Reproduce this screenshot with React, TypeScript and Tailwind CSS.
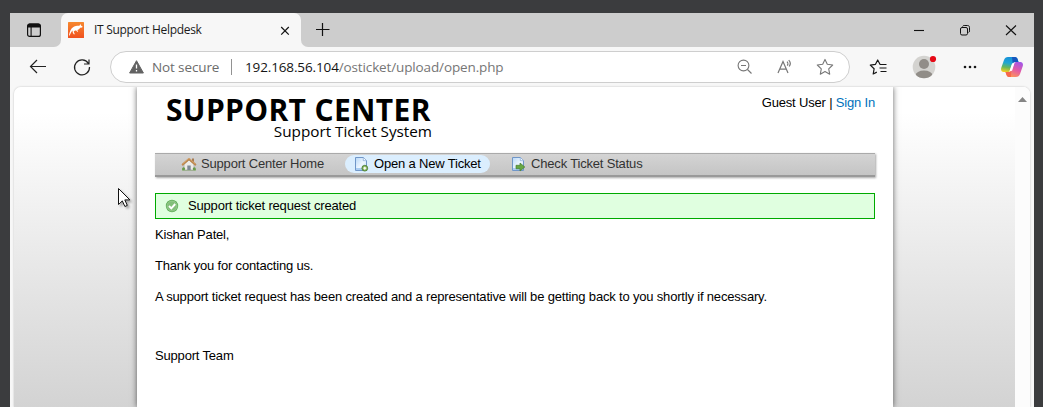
import React from "react";

const ui = "font-['Open_Sans','Noto_Sans',sans-serif]";

function TabActionsIcon() {
  return (
    <svg width="16" height="16" viewBox="0 0 16 16" fill="none" className="block">
      <rect x="1.6" y="2.1" width="12.8" height="12.3" rx="2" stroke="#111" strokeWidth="1.2" />
      <path d="M1.5 5.4V4a2.3 2.3 0 0 1 2.3-2.4h8.4A2.3 2.3 0 0 1 14.5 4v1.4z" fill="#111" />
      <path d="M5.1 5v9" stroke="#111" strokeWidth="1.1" />
    </svg>
  );
}

function Favicon() {
  return (
    <svg width="16" height="16" viewBox="0 0 16 16" className="block">
      <defs>
        <linearGradient id="fav" x1="0" y1="0" x2="0" y2="1">
          <stop offset="0" stopColor="#f6882e" />
          <stop offset="1" stopColor="#f0511f" />
        </linearGradient>
      </defs>
      <rect width="16" height="16" rx=".6" fill="url(#fav)" />
      <path d="M1 13.400C1.500 10 2.600 6.400 5.800 4.700c2-1.100 4-.9 5.600-.9L12.500 2l.5 1.500 1.600 1.100-.5.8-1.900.3c-.7 1.200-1.600 2-2.800 2.400l.7 1.900-.8-.2-1.100-1.300c-1.200 0-2 .5-2.500 1.300l1.200 2.400H5.700l-1.200-2.100.3-1.700C3.500 9.300 2.500 11 1.700 13.500z" fill="#fff" />
    </svg>
  );
}

function HomeIcon() {
  return (
    <svg width="16" height="16" viewBox="0 0 16 16" className="block">
      <path d="M1 13.300h14v1.200H1z" fill="#77a85a" />
      <path d="M3 8.200 8 4l5 4.200V14H3z" fill="#ecebe8" stroke="#a2a09b" strokeWidth=".7" />
      <path d="M6.300 14V9.500h3.400V14z" fill="#7f8894" />
      <path d="M11 2.500h2v4l-2-2z" fill="#a77c55" />
      <path d="M1.700 8.600 8 3l6.300 5.600" fill="none" stroke="#bd864b" strokeWidth="2" strokeLinejoin="round" strokeLinecap="round" />
      <path d="M1.600 7.900 8 2.300l6.400 5.600" fill="none" stroke="#dcae78" strokeWidth=".7" />
      <circle cx="2.600" cy="12.700" r="1.500" fill="#699b4c" />
      <circle cx="13.300" cy="12.700" r="1.500" fill="#699b4c" />
    </svg>
  );
}

function PageIcon({ arrow }: { arrow?: boolean }) {
  return (
    <svg width="16" height="16" viewBox="0 0 16 16" className="block">
      <defs>
        <linearGradient id="paper" x1="0" y1="0" x2="1" y2="1">
          <stop offset="0" stopColor="#b8d8f7" />
          <stop offset=".55" stopColor="#eef6ff" />
          <stop offset="1" stopColor="#b6d6f6" />
        </linearGradient>
      </defs>
      <path d="M2.500 1.500h8l3 3v10h-11z" fill="url(#paper)" stroke="#7096c8" />
      <path d="M10.300 1.500v3.200h3.200" fill="#f6faff" stroke="#7da3d3" strokeWidth=".7" />
      <path d="M3 12h10v2H3z" fill="#8fbceb" opacity=".7" />
      {arrow ? (
        <path d="M6 9.300h4V7l4.800 4-4.800 4v-2.300H6z" fill="#67a844" stroke="#477d2f" strokeWidth=".7" />
      ) : (
        <g>
          <circle cx="11.800" cy="12.200" r="2.900" fill="#7eae54" stroke="#4c7e37" strokeWidth=".8" />
          <path d="M10.300 12.200h3M11.800 10.700v3" stroke="#fff" strokeWidth="1.200" />
        </g>
      )}
    </svg>
  );
}

function CheckIcon() {
  return (
    <svg width="16" height="16" viewBox="0 0 16 16" className="block">
      <circle cx="8" cy="8" r="6.200" fill="#5fae59" />
      <circle cx="8" cy="8" r="5" fill="#82bf79" stroke="#a3d19a" strokeWidth=".7" />
      <path d="m5 8 2.300 2.300L11.200 6" fill="none" stroke="#fff" strokeWidth="1.900" />
    </svg>
  );
}

function CopilotIcon() {
  return (
    <svg width="24" height="22" viewBox="0 0 24 22" className="block">
      <defs>
        <linearGradient id="cpA" x1=".5" y1="0" x2=".3" y2="1">
          <stop offset="0" stopColor="#168fd8" />
          <stop offset=".4" stopColor="#20a6d4" />
          <stop offset=".7" stopColor="#68b75b" />
          <stop offset="1" stopColor="#f4cf20" />
        </linearGradient>
        <linearGradient id="cpB" x1=".8" y1="0" x2=".3" y2="1">
          <stop offset="0" stopColor="#a256e8" />
          <stop offset=".5" stopColor="#e35aa5" />
          <stop offset="1" stopColor="#ff9955" />
        </linearGradient>
      </defs>
      <path d="M8 1h7c1.500 0 2.200 1 2.600 2.200L18.500 6h-3c-2.200 0-3 1-3.600 2.700L10 14.200C9.300 16.200 8.200 16 7 16H3.700C1.500 16 .6 14.100 1.200 12L4 3.900C4.700 2 6 1 8 1z" fill="url(#cpA)" />
      <path d="M12 1h3c1.500 0 2.200 1 2.600 2.200L18.500 6h-3c-1.300 0-2.200.4-2.800 1.200z" fill="#1656bd" />
      <path d="M16 21H9c-1.500 0-2.200-1-2.600-2.200L5.500 16h2.800c2.200 0 3-1 3.600-2.700L14 7.800C14.700 6 15.800 6 17 6h3.300c2.200 0 3.100 1.900 2.500 4L20 18.100c-.7 1.900-2 2.900-4 2.900z" fill="url(#cpB)" />
      <path d="M5.500 16h2.800c1.500 0 2.400-.5 3-1.500L11 21H9c-1.500 0-2.200-1-2.600-2.200z" fill="#f6684d" />
      <path d="m12 7.700-2.500 7.300 2.600-.2L14.500 7z" fill="#fff" />
    </svg>
  );
}

function TabStrip() {
  return (
    <div className="flex h-[34px] shrink-0 bg-[#cdcdcd]">
      <div className="flex h-[34px] w-[51px] bg-[#f7f7f7]">
        <div className="flex h-[34px] w-[51px] items-center rounded-br-[7px] bg-[#cdcdcd] pl-4">
          <TabActionsIcon />
        </div>
      </div>
      <div className="flex h-[34px] w-[240px] items-center rounded-t-[7px] bg-[#f7f7f7] pl-[7px]">
        <Favicon />
        <span className={`${ui} ml-[10px] w-[185px] text-[12px] tracking-[-0.3px] text-[#1b1b1b]`}>IT Support Helpdesk</span>
        <svg width="12" height="12" viewBox="0 0 12 12" className="mt-px block">
          <path d="m2.200 2 7.600 7.600M9.800 2 2.200 9.600" stroke="#111" strokeWidth="1.200" />
        </svg>
      </div>
      <div className="flex h-[34px] flex-1 bg-[#f7f7f7]">
        <div className="flex h-[34px] flex-1 items-center rounded-bl-[7px] bg-[#cdcdcd] pl-[14px]">
          <svg width="16" height="16" viewBox="0 0 16 16" className="block">
            <path d="M7.500 1v13M1 7.500h13.500" stroke="#111" strokeWidth="1.200" />
          </svg>
          <svg width="110" height="14" viewBox="0 0 110 14" fill="none" stroke="#111" className="ml-auto mr-4 block">
            <path d="M6 7.500h10" strokeWidth="1.100" />
            <rect x="52.500" y="4.500" width="7" height="7.500" rx="1.500" />
            <path d="M54.500 3.500c.4-.8 1-1 1.700-1h3.300c1.400 0 2 .8 2 2v3.300c0 .9-.3 1.500-1 1.800" />
            <path d="m98 2.500 10 9.500m0-9.500-10 9.500" strokeWidth="1.100" />
          </svg>
        </div>
      </div>
    </div>
  );
}

function Toolbar() {
  return (
    <div className="flex h-[40px] shrink-0 bg-[#f7f7f7] pt-1 pl-[18px]">
      <svg width="20" height="32" viewBox="0 0 20 32" fill="none" stroke="#222" strokeWidth="1.200" className="block">
        <path d="M18 15.500H2.500M9 9l-6.500 6.500L9 22" />
      </svg>
      <svg width="20" height="32" viewBox="0 0 20 32" fill="none" stroke="#222" strokeWidth="1.200" className="ml-6 block">
        <path d="M16.400 12.500A7.500 7.500 0 1 0 17.500 16M17 8.500v4.500h-5" />
      </svg>
      <div className={`${ui} ml-[18px] flex h-[32px] w-[740px] items-center rounded-full border border-[#cecece] bg-white pl-[18px]`}>
        <svg width="15" height="14" viewBox="0 0 15 14" className="block">
          <path d="M7.500.7 14.400 13H.6z" fill="#626262" stroke="#626262" strokeLinejoin="round" />
          <path d="M7.500 4.500v4M7.500 10v1.400" stroke="#fff" strokeWidth="1.300" />
        </svg>
        <span className="ml-[8px] w-[79px] whitespace-nowrap text-[13.500px] tracking-[-0.12px] text-[#6c6c6c]">Not secure</span>
        <span className="h-4 w-px bg-[#929292]" />
        <span className="ml-[13px] whitespace-nowrap text-[13.500px] tracking-[-0.13px] text-[#141414]">
          192.168.56.104<span className="text-[#767676]">/osticket/upload/open.php</span>
        </span>
        <div className="ml-auto mr-[14px] flex items-center">
          <svg width="18" height="18" viewBox="0 0 18 18" fill="none" stroke="#777" strokeWidth="1.100" className="block">
            <circle cx="8.500" cy="7.500" r="5.400" />
            <path d="m12.500 11.500 4 4M6 7.500h5" />
          </svg>
          <svg width="20" height="18" viewBox="0 0 20 18" fill="none" stroke="#777" strokeWidth="1.200" className="ml-[22px] block">
            <path d="M3 15 8 3.500 13 15M4.700 11.200h6.600M12 3.700c1 1 1.200 3 .3 4M13.700 2.200c1.700 1.700 2 4.300.5 6.300" />
          </svg>
          <svg width="20" height="20" viewBox="0 0 20 20" fill="none" stroke="#777" strokeWidth="1.100" strokeLinejoin="round" className="ml-[20px] block">
            <path d="m10 2.400 2.300 4.900 5.400.7-4 3.800 1 5.400-4.700-2.600-4.700 2.600 1-5.400-4-3.800 5.400-.7z" />
          </svg>
        </div>
      </div>
      <svg width="20" height="32" viewBox="0 0 20 32" fill="none" stroke="#161616" strokeWidth="1.200" strokeLinejoin="round" className="ml-[18px] block">
        <path d="M15 13.500h-2.900L9.700 9 7.500 13.300l-5.200.8L6.100 17.800 5.200 23l3.600-1.900M12.500 13.500h6M11.500 17h7M12.500 20.500h6" />
      </svg>
      <svg width="28" height="32" viewBox="0 0 28 32" className="ml-6 block">
        <defs><clipPath id="avatar"><circle cx="12" cy="16" r="11.300" /></clipPath></defs>
        <circle cx="12" cy="16" r="11.300" fill="#d4d3d0" />
        <g clipPath="url(#avatar)" fill="#918d88">
          <circle cx="12" cy="13" r="5" />
          <ellipse cx="12" cy="24.500" rx="8.500" ry="5" />
        </g>
        <circle cx="21" cy="8" r="3.100" fill="#e60a17" />
      </svg>
      <svg width="20" height="32" viewBox="0 0 20 32" className="ml-[20px] block" fill="#171717">
        <circle cx="5" cy="16" r="1.300" /><circle cx="10" cy="16" r="1.300" /><circle cx="15" cy="16" r="1.300" />
      </svg>
      <div className="ml-5 pt-[5px]"><CopilotIcon /></div>
    </div>
  );
}

export default function App() {
  return (
    <div className="relative h-[407px] w-[1043px] overflow-hidden bg-[#3b3c3e] pt-[13px] pl-[10px] font-['Liberation_Sans',Arial,sans-serif]">
      <div className="flex h-[394px] w-[1024px] flex-col bg-[#f7f7f7]">
        <TabStrip />
        <Toolbar />
        <div className="ml-[4px] flex h-[320px] w-[1016px] overflow-hidden rounded-t-[7px] bg-linear-to-b from-white from-[8%] to-[#d3d3d3] shadow-[0_0_2px_rgba(0,0,0,0.25)]">
          <main className="ml-[123px] h-[320px] w-[756px] bg-white px-[18px] text-[13px] tracking-[-0.18px] text-black shadow-[0_0_6px_rgba(0,0,0,0.6)]">
            <header className="flex h-[66px] justify-between">
              <div className="ml-[11px] w-[266px] pt-[9px] font-['Open_Sans','Noto_Sans',sans-serif]">
                <div className="h-[28px] whitespace-nowrap text-[30px] leading-[28px] font-bold tracking-[0.34px]">SUPPORT CENTER</div>
                <div className="h-[14px] text-right whitespace-nowrap text-[15.3px] leading-[14px] tracking-[-0.02px]">Support Ticket System</div>
              </div>
              <div className="h-[20px] pt-[6px] leading-[20px] whitespace-nowrap">Guest User | <a className="text-[#0072bc]">Sign In</a></div>
            </header>
            <nav className="flex h-[24px] items-start border-t border-[#aaa] bg-linear-to-b from-[#d4d4d4] to-[#c3c3c3] text-[13px] text-[#333] shadow-[inset_0_-2px_0_#999,1px_1px_2px_rgba(0,0,0,0.35)]">
              <a className="ml-[26px] flex h-[20px] w-[164px] items-center whitespace-nowrap"><HomeIcon /><span className="ml-[4px]">Support Center Home</span></a>
              <a className="mt-px flex h-[18px] w-[145px] items-center rounded-full bg-[#dbeefe] pl-[8px] whitespace-nowrap text-black"><PageIcon /><span className="ml-[5px]">Open a New Ticket</span></a>
              <a className="ml-[20px] flex h-[20px] items-center whitespace-nowrap"><PageIcon arrow /><span className="ml-[5px]">Check Ticket Status</span></a>
            </nav>
            <div className="mt-[16px] flex h-[26px] items-center border border-[#0a0] bg-[#e0ffe0] pl-[8px]">
              <CheckIcon /><span className="ml-[8px]">Support ticket request created</span>
            </div>
            <div className="flex flex-col whitespace-nowrap leading-[15px]">
              <p className="mt-[8px]">Kishan Patel,</p>
              <p className="mt-[16px]">Thank you for contacting us.</p>
              <p className="mt-[16px]">A support ticket request has been created and a representative will be getting back to you shortly if necessary.</p>
              <p className="mt-[44px]">Support Team</p>
            </div>
          </main>
          <div className="ml-auto flex w-[15px] justify-center bg-[#fcfcfc] pt-[10px]">
            <svg width="9" height="5" viewBox="0 0 9 5" className="block"><path d="M0 5 4.500 0 9 5z" fill="#858585" /></svg>
          </div>
        </div>
      </div>
      <svg width="18" height="24" viewBox="0 0 18 24" className="absolute top-[187px] left-[117px] drop-shadow-[2px_2px_1px_rgba(0,0,0,0.3)]">
        <path d="M1.500 1.500v16l3.800-3.600 2.600 5.600 2.400-1.100-2.500-5.500h5.100z" fill="#fff" stroke="#111" strokeWidth="1" />
      </svg>
    </div>
  );
}
